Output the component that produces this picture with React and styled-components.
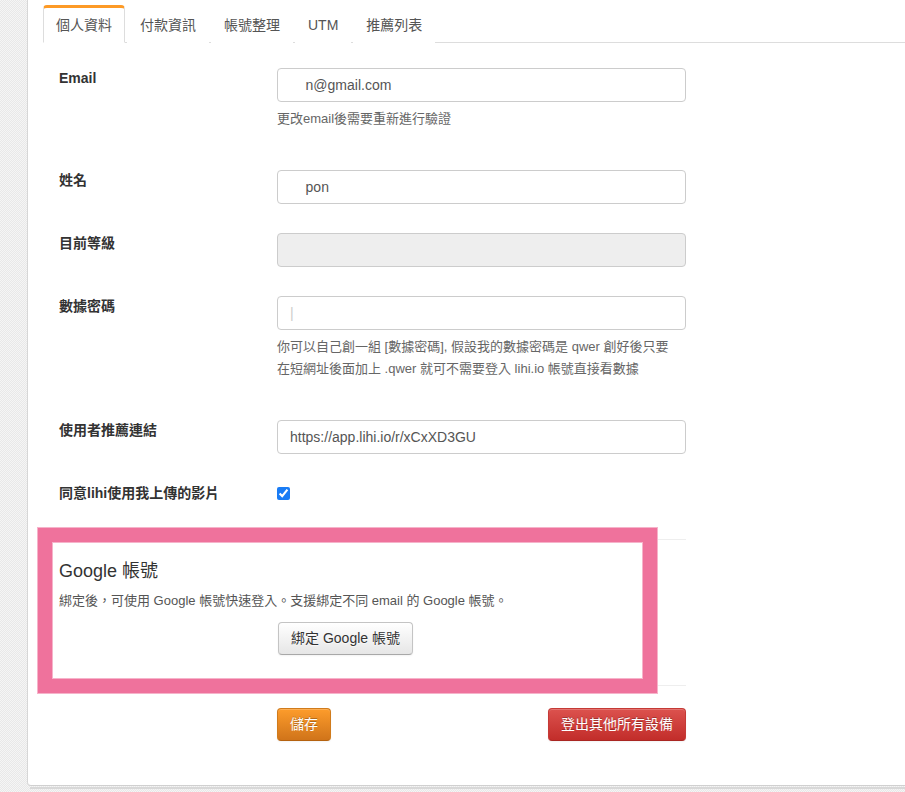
import React from 'react';
import styled, { createGlobalStyle } from 'styled-components';

const GlobalStyle = createGlobalStyle`
  html, body {
    margin: 0;
    padding: 0;
  }
  body {
    overflow: hidden;
    font-family: "Liberation Sans", "Noto Sans CJK TC", sans-serif;
    font-size: 14px;
    color: #333;
    background-color: #f5f5f5;
    background-image:
      linear-gradient(45deg, #e8e8e8 25%, transparent 25%, transparent 75%, #e8e8e8 75%),
      linear-gradient(45deg, #e8e8e8 25%, transparent 25%, transparent 75%, #e8e8e8 75%);
    background-size: 2px 2px;
    background-position: 0 0, 1px 1px;
  }
`;

const tabs = ['個人資料', '付款資訊', '帳號整理', 'UTM', '推薦列表'];

const App = () => {
  return (
    <>
      <GlobalStyle />
      <Panel>
        <Tabs>
          {tabs.map((tab, index) => (
            <Tab key={tab} $active={index === 0}>
              {tab}
            </Tab>
          ))}
        </Tabs>

        <Form>
          <Row>
            <Label>Email</Label>
            <Field>
              <Input defaultValue={'\u00a0\u00a0\u00a0\u00a0n@gmail.com'} />
              <Help>更改email後需要重新進行驗證</Help>
            </Field>
          </Row>

          <Row>
            <Label>姓名</Label>
            <Field>
              <Input defaultValue={'\u00a0\u00a0\u00a0\u00a0pon'} />
            </Field>
          </Row>

          <Row>
            <Label>目前等級</Label>
            <Field>
              <Input disabled defaultValue="" />
            </Field>
          </Row>

          <Row>
            <Label>數據密碼</Label>
            <Field>
              <Input placeholder="|" defaultValue="" />
              <Help>
                你可以自己創一組 [數據密碼], 假設我的數據密碼是 qwer 創好後只要
                <br />
                在短網址後面加上 .qwer 就可不需要登入 lihi.io 帳號直接看數據
              </Help>
            </Field>
          </Row>

          <Row>
            <Label>使用者推薦連結</Label>
            <Field>
              <Input readOnly value="https://app.lihi.io/r/xCxXD3GU" />
            </Field>
          </Row>

          <CheckRow>
            <Label>同意lihi使用我上傳的影片</Label>
            <Field>
              <Checkbox type="checkbox" defaultChecked />
            </Field>
          </CheckRow>

          <GoogleSection>
            <Highlight>
              <SectionTitle>Google 帳號</SectionTitle>
              <SectionText>
                綁定後，可使用 Google 帳號快速登入。支援綁定不同 email 的 Google 帳號。
              </SectionText>
              <Center>
                <Button>綁定 Google 帳號</Button>
              </Center>
            </Highlight>
          </GoogleSection>

          <Actions>
            <Button $variant="warning">儲存</Button>
            <Button $variant="danger">登出其他所有設備</Button>
          </Actions>
        </Form>
      </Panel>
      <Shadow />
    </>
  );
};

const Panel = styled.div`
  box-sizing: border-box;
  margin-left: 27px;
  width: 900px;
  height: 786px;
  padding: 5px 0 0 15px;
  background: #fff;
  border-left: 1px solid #d6d6d6;
  border-bottom: 1px solid #d0d0d0;
  border-bottom-left-radius: 4px;
`;

const Shadow = styled.div`
  margin-left: 30px;
  height: 2px;
  background: #d8d8d8;
  margin-top: 1px;
`;

const Tabs = styled.ul`
  display: flex;
  margin: 0;
  padding: 0;
  list-style: none;
  border-bottom: 1px solid #ddd;
`;

const Tab = styled.li`
  margin: 0 2px -1px 0;
  padding: 7px 12px;
  line-height: 20px;
  font-size: 14px;
  color: #555;
  background: #fff;
  border: 1px solid ${(p) => (p.$active ? '#ddd' : 'transparent')};
  border-top: 3px solid ${(p) => (p.$active ? '#fd9a26' : 'transparent')};
  border-bottom-color: ${(p) => (p.$active ? '#fff' : 'transparent')};
  border-radius: 4px 4px 0 0;
  cursor: pointer;
`;

const Form = styled.div`
  width: 627px;
  padding: 25px 0 0 16px;
`;

const Row = styled.div`
  display: flex;
  margin-bottom: 29px;
`;

const CheckRow = styled(Row)`
  margin-bottom: 0;
  height: 22px;
  align-items: flex-start;
`;

const Label = styled.div`
  flex: 0 0 218px;
  font-weight: bold;
  font-size: 14px;
  line-height: 20px;
  color: #333;
`;

const Field = styled.div`
  flex: 1;
  min-width: 0;
`;

const Input = styled.input`
  display: block;
  box-sizing: border-box;
  width: 100%;
  height: 34px;
  padding: 6px 12px;
  font-family: "Liberation Sans", "Noto Sans CJK TC", sans-serif;
  font-size: 14px;
  color: #555;
  background: ${(p) => (p.disabled ? '#eee' : '#fff')};
  border: 1px solid #ccc;
  border-radius: 4px;
  outline: none;

  &::placeholder {
    color: #ccc;
  }
`;

const Help = styled.p`
  margin: 6px 0 11px;
  font-size: 13px;
  line-height: 22px;
  color: #666;
  white-space: nowrap;
`;

const Checkbox = styled.input`
  margin: 4px 0 0;
  width: 13px;
  height: 13px;
  accent-color: #1a7cf5;
`;

const GoogleSection = styled.div`
  margin-top: 34px;
  border-top: 1px solid #eee;
  border-bottom: 1px solid #eee;
`;

const Highlight = styled.div`
  box-sizing: border-box;
  width: 619px;
  height: 165px;
  margin: -12px 0 -8px -21px;
  padding: 17px 7px 0;
  background: #fff;
  border: 14px solid #ef729c;
  box-shadow: 0 0 0 1px #f6b3ca, inset 0 0 0 1px #f6b3ca;
`;

const SectionTitle = styled.h3`
  margin: 0 0 8px;
  font-size: 18px;
  font-weight: normal;
  line-height: 24px;
  color: #333;
`;

const SectionText = styled.p`
  margin: 0 0 11px;
  font-size: 13px;
  line-height: 20px;
  color: #555;
`;

const Center = styled.div`
  text-align: center;
  padding-right: 4px;
`;

const variants = {
  default: `
    color: #333;
    text-shadow: 0 1px 1px rgba(255, 255, 255, 0.75);
    background: linear-gradient(#ffffff, #e6e6e6);
    border-color: #c4c4c4 #c4c4c4 #a8a8a8;
  `,
  warning: `
    color: #fff;
    text-shadow: 0 -1px 0 rgba(0, 0, 0, 0.25);
    background: linear-gradient(#fd9c2b, #d0741a);
    border-color: #d07b1c #d07b1c #b5620f;
  `,
  danger: `
    color: #fff;
    text-shadow: 0 -1px 0 rgba(0, 0, 0, 0.25);
    background: linear-gradient(#dc524e, #c22d2a);
    border-color: #c53a36 #c53a36 #a92622;
  `,
};

const Button = styled.button`
  box-sizing: border-box;
  display: inline-block;
  height: 33px;
  padding: 6px 12px;
  font-family: "Liberation Sans", "Noto Sans CJK TC", sans-serif;
  font-size: 14px;
  line-height: 19px;
  border: 1px solid;
  border-radius: 4px;
  box-shadow: inset 0 1px 0 rgba(255, 255, 255, 0.2), 0 1px 2px rgba(0, 0, 0, 0.05);
  cursor: pointer;
  ${(p) => variants[p.$variant || 'default']}
`;

const Actions = styled.div`
  display: flex;
  justify-content: space-between;
  margin: 22px 0 0 218px;
`;

export default App;
